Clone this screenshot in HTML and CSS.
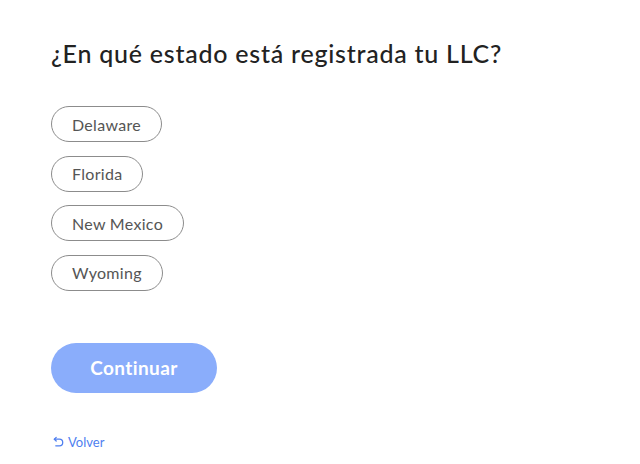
FILE: index.html
```html
<!doctype html>
<html>
<head>
    <meta charset="UTF-8">
    <title>Estado de la LLC</title>
    <link rel="stylesheet" href="styles.css">
</head>
<body>
<div class="step">
    <h1 class="question">¿En qué estado está registrada tu LLC?</h1>
    <div class="options">
        <button class="option">Delaware</button>
        <button class="option">Florida</button>
        <button class="option">New Mexico</button>
        <button class="option">Wyoming</button>
    </div>
    <button class="next" disabled>Continuar</button>
    <a class="back" href="#">
        <svg width="11" height="11" viewBox="0 0 12 12" fill="none" stroke="currentColor" stroke-width="1.4" stroke-linecap="round" stroke-linejoin="round">
            <path d="M3.5 1.5 1.5 3.5 3.5 5.5"/>
            <path d="M1.5 3.5h5.5a3.6 3.6 0 0 1 0 7.2H3"/>
        </svg>
        Volver
    </a>
</div>
</body>
</html>
```

FILE: styles.css
```css
body {
    margin: 0;
    font-family: Lato, "Open Sans", sans-serif;
    background: #fff;
}

.step {
    padding: 36px 51px 0;
    display: flex;
    flex-direction: column;
    align-items: flex-start;
}

.question {
    margin: 0;
    font-size: 25px;
    font-weight: 500;
    line-height: 34px;
    color: #222;
    letter-spacing: 0.75px;
}

.options {
    margin-top: 36px;
    display: flex;
    flex-direction: column;
    align-items: flex-start;
    gap: 13.5px;
}

.option {
    height: 36px;
    padding: 0 20px;
    border: 1px solid #8c8c8c;
    border-radius: 18px;
    background: #fff;
    font-family: inherit;
    font-size: 16px;
    color: #555;
    letter-spacing: 0.3px;
    cursor: pointer;
}

.next {
    margin-top: 52px;
    width: 166px;
    height: 50px;
    border: none;
    border-radius: 25px;
    background: #8aadfb;
    color: #fff;
    font-family: inherit;
    font-size: 19px;
    font-weight: 700;
    letter-spacing: 0.4px;
}

.back {
    margin-top: 41px;
    margin-left: 2px;
    display: flex;
    align-items: center;
    gap: 4px;
    font-size: 13px;
    color: #4f7ff0;
    text-decoration: none;
}
```
